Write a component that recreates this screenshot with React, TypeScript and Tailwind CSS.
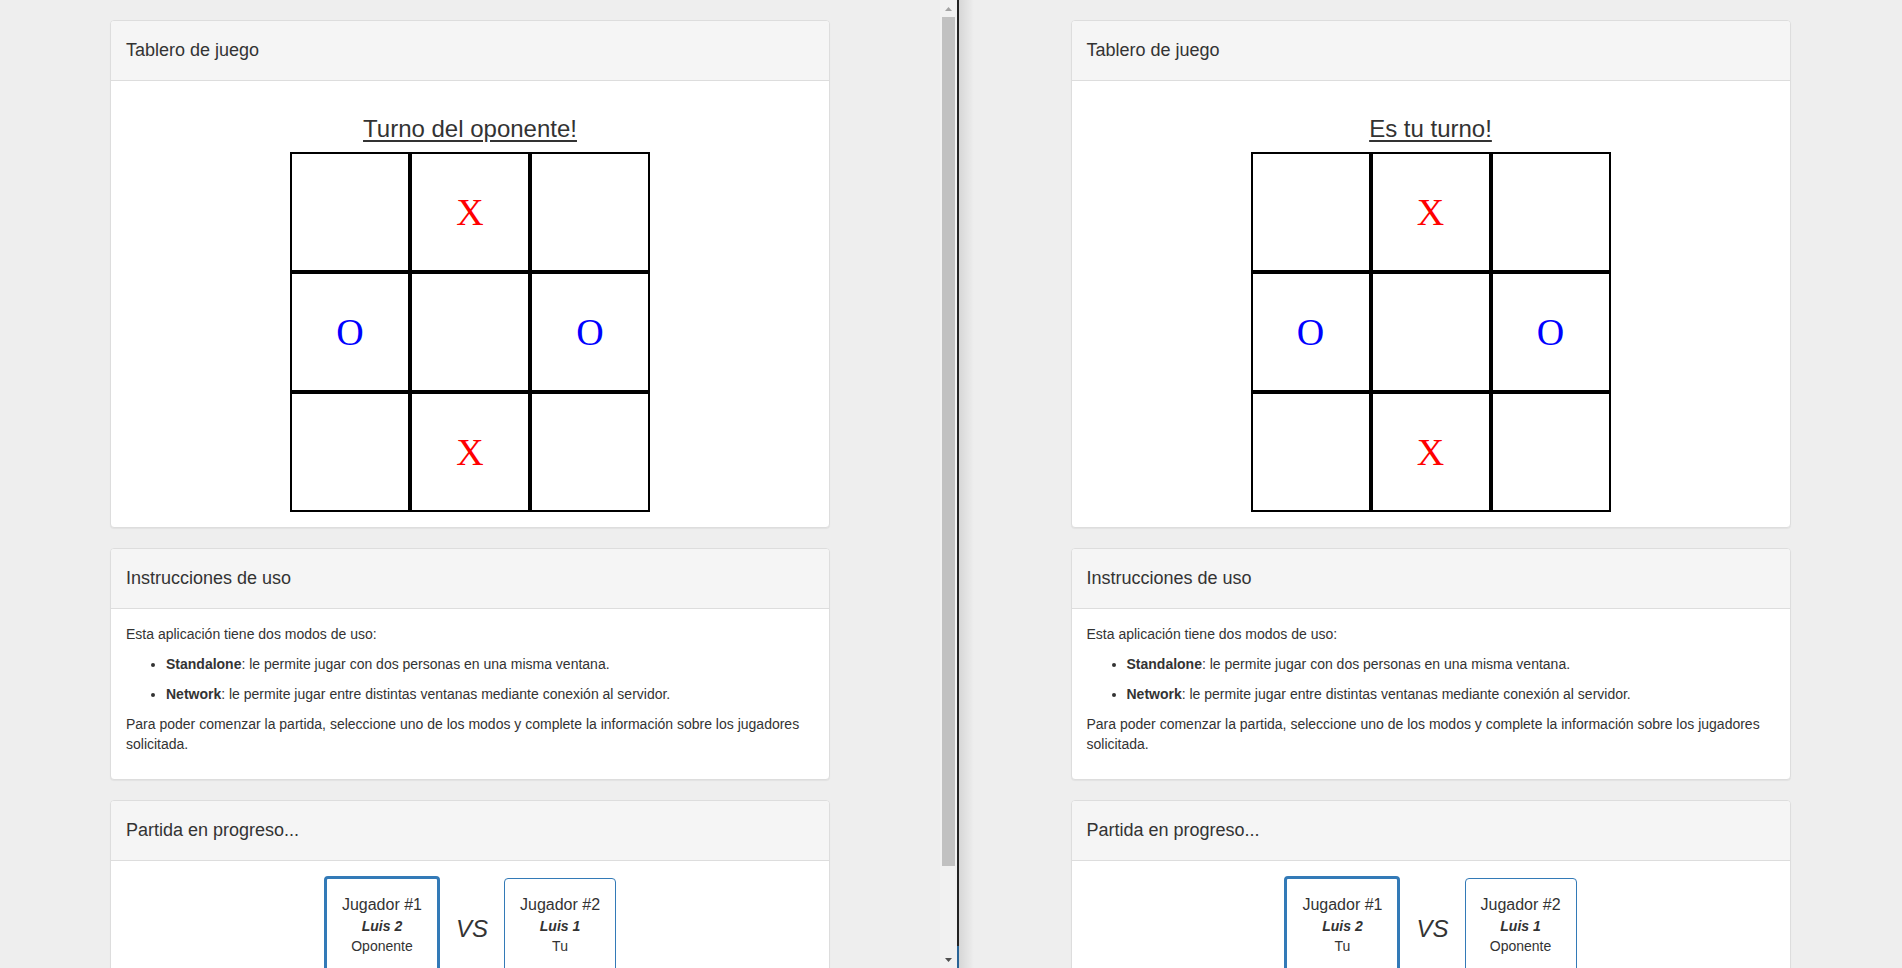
import React from "react";

type Mark = "X" | "O" | "";

const board: Mark[] = ["", "X", "", "O", "", "O", "", "X", ""];

type Player = { title: string; name: string; role: string; active?: boolean };

const Panel = ({ title, children }: { title: string; children: React.ReactNode }) => {
  return (
    <div className="mb-[20px] rounded-[4px] border border-[#ddd] bg-white shadow-[0_1px_1px_rgba(0,0,0,0.05)]">
      <div className="rounded-t-[3px] border-b border-[#ddd] bg-[#f5f5f5] px-[15px] py-[10px]">
        <h4 className="my-[10px] text-[18px] leading-[19px] font-normal">{title}</h4>
      </div>
      <div className="p-[15px]">{children}</div>
    </div>
  );
};

const PlayerCard = ({ p }: { p: Player }) => {
  return (
    <div
      className={
        p.active
          ? "rounded-[4px] border-[3px] border-[#337ab7] p-[15px] text-center"
          : "rounded-[4px] border border-[#337ab7] p-[15px] text-center"
      }
    >
      <div className="text-[16px] leading-[22px]">{p.title}</div>
      <div className="font-bold italic">{p.name}</div>
      <div>{p.role}</div>
    </div>
  );
};

const GameWindow = ({ turn, players }: { turn: string; players: Player[] }) => {
  return (
    <div className="mx-auto w-[750px] px-[15px] pt-[20px]">
      {/* board */}
      <Panel title="Tablero de juego">
        <h3 className="mt-[20px] mb-[10px] text-center text-[24px] leading-[1.1] underline underline-offset-[3px]">
          {turn}
        </h3>
        <div className="mx-auto grid w-[360px] grid-cols-3">
          {board.map((m, i) => (
            <div
              key={i}
              className="flex h-[120px] items-center justify-center border-2 border-black font-['Liberation_Serif',serif] text-[38px] leading-none"
            >
              {m === "X" && <span className="text-[#ff0000]">X</span>}
              {m === "O" && <span className="text-[#0000ff]">O</span>}
            </div>
          ))}
        </div>
      </Panel>

      {/* instructions */}
      <Panel title="Instrucciones de uso">
        <p className="mb-[10px]">Esta aplicación tiene dos modos de uso:</p>
        <ul className="list-disc pl-[40px]">
          <li className="mb-[10px]">
            <b>Standalone</b>: le permite jugar con dos personas en una misma ventana.
          </li>
          <li className="mb-[10px]">
            <b>Network</b>: le permite jugar entre distintas ventanas mediante conexión al servidor.
          </li>
        </ul>
        <p className="mb-[10px]">
          Para poder comenzar la partida, seleccione uno de los modos y complete la información sobre los
          jugadores solicitada.
        </p>
      </Panel>

      {/* players */}
      <Panel title="Partida en progreso...">
        <div className="flex items-center justify-center">
          <PlayerCard p={players[0]} />
          <div className="mt-[8px] px-[16px] text-[24px] italic">VS</div>
          <PlayerCard p={players[1]} />
        </div>
      </Panel>
    </div>
  );
};

const Scrollbar = () => {
  return (
    <div className="flex h-full w-[17px] flex-col bg-[#f1f1f1]">
      <div className="flex h-[17px] items-center justify-center">
        <svg width="7" height="4" viewBox="0 0 7 4">
          <path d="M0 4 L3.5 0 L7 4 Z" fill="#a3a3a3" />
        </svg>
      </div>
      <div className="flex-1">
        <div className="mx-[2px] h-[849px] bg-[#c1c1c1]" />
      </div>
      <div className="flex h-[17px] items-center justify-center">
        <svg width="7" height="4" viewBox="0 0 7 4">
          <path d="M0 0 L7 0 L3.5 4 Z" fill="#505050" />
        </svg>
      </div>
    </div>
  );
};

export default function App() {
  return (
    <div className="flex h-[968px] w-[1902px] overflow-hidden bg-[#eeeeee] font-['Liberation_Sans',Arial,sans-serif] text-[14px] leading-[20px] text-[#333]">
      {/* left window */}
      <div className="flex h-full w-[957px]">
        <div className="h-full w-[940px] overflow-hidden">
          <GameWindow
            turn="Turno del oponente!"
            players={[
              { title: "Jugador #1", name: "Luis 2", role: "Oponente", active: true },
              { title: "Jugador #2", name: "Luis 1", role: "Tu" },
            ]}
          />
        </div>
        <Scrollbar />
      </div>

      {/* divider */}
      <div className="flex h-full w-[2px] flex-col">
        <div className="flex-1 bg-[#222]" />
        <div className="h-[22px] bg-[#2a6496]" />
      </div>

      {/* right window */}
      <div className="relative h-full w-[943px] overflow-hidden">
        <div className="pointer-events-none absolute inset-y-0 left-0 w-[15px] bg-gradient-to-r from-black/10 to-transparent" />
        <GameWindow
          turn="Es tu turno!"
          players={[
            { title: "Jugador #1", name: "Luis 2", role: "Tu", active: true },
            { title: "Jugador #2", name: "Luis 1", role: "Oponente" },
          ]}
        />
      </div>
    </div>
  );
}
